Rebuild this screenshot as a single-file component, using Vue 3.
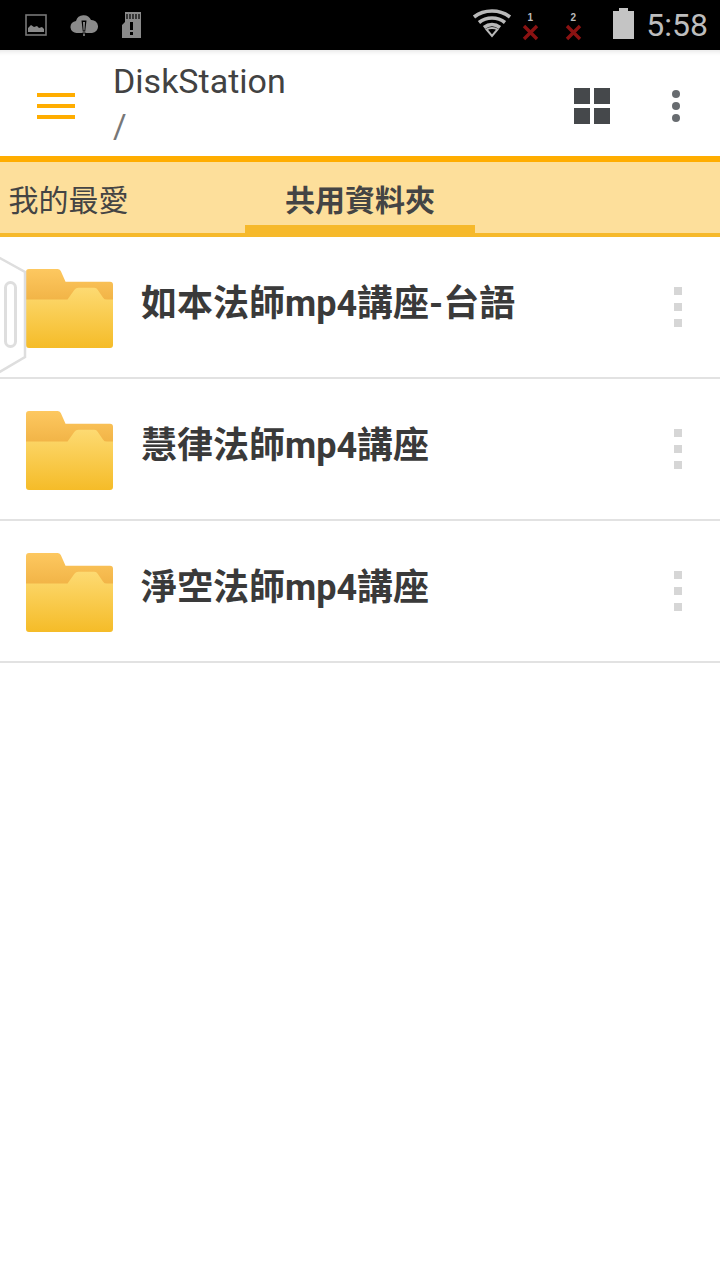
<script setup>
const folders = ['如本法師mp4講座-台語', '慧律法師mp4講座', '淨空法師mp4講座']
</script>

<template>
  <div class="page">
    <div class="status">
      <div class="left-icons">
        <svg class="i-img" width="22" height="22" viewBox="0 0 22 22">
          <rect x="1" y="1" width="20" height="20" fill="none" stroke="#777" stroke-width="1.6" />
          <path d="M3 18v-4l3-3 3 2 3-1 2 2 3-1 2 2v3z" fill="#8a8a8a" />
        </svg>
        <svg class="i-cloud" width="28" height="22" viewBox="0 0 28 22">
          <path d="M7 18a6 6 0 0 1-1-12 8 8 0 0 1 15-1 6.500 6.500 0 0 1 1 13z" fill="#8a8a8a" />
          <path d="M11.500 5.500h5l-1.300 11h-2.400zM12.400 17.500h3.200v4.500h-3.200z" fill="#000" />
          <path d="M13 7h2l-.5 8.500h-1zM13.200 18.500h1.600v2.500h-1.600z" fill="#8a8a8a" />
        </svg>
        <svg class="i-sd" width="19" height="26" viewBox="0 0 19 26">
          <path d="M3 0h16v26H0V13l3-3z" fill="#8a8a8a" />
          <path d="M5 2v5M8 2v5M11 2v5M14 2v5M17 2v5" stroke="#000" stroke-width="1.200" />
          <rect x="8" y="10" width="3" height="8" fill="#000" />
          <rect x="8" y="20" width="3" height="3" fill="#000" />
        </svg>
      </div>
      <div class="right-icons">
        <svg class="i-wifi" width="40" height="30" viewBox="0 0 40 30">
          <g fill="none" stroke="#b9b9b9" stroke-width="3.600">
            <path d="M2 9C12 1 28 1 38 9" />
            <path d="M7 14.500C14.500 8.500 25.500 8.500 33 14.500" />
            <path d="M12 19.500C17 15.500 23 15.500 28 19.500" />
          </g>
          <path d="M14.500 21.500c3-2 8-2 11 0l-5.500 6.500z" fill="none" stroke="#b9b9b9" stroke-width="2" />
        </svg>
        <div class="sim sim-one"><span class="sim-num">1</span><span class="sim-x">
          <svg width="17" height="17" viewBox="0 0 17 17"><path d="M2 2l13 13M15 2L2 15" stroke="#8b1212" stroke-width="3.400" /></svg>
        </span></div>
        <div class="sim sim-two"><span class="sim-num">2</span><span class="sim-x">
          <svg width="17" height="17" viewBox="0 0 17 17"><path d="M2 2l13 13M15 2L2 15" stroke="#8b1212" stroke-width="3.400" /></svg>
        </span></div>
        <svg class="i-batt" width="21" height="31" viewBox="0 0 21 31">
          <path d="M6 0h9v3h6v28H0V3h6z" fill="#c4c4c4" />
        </svg>
        <span class="clock">5:58</span>
      </div>
    </div>

    <header class="appbar">
      <div class="menu"><i></i><i></i><i></i></div>
      <div class="title">
        <div class="name">DiskStation</div>
        <div class="path">/</div>
      </div>
      <div class="grid-btn"><i></i><i></i><i></i><i></i></div>
      <div class="more"><i></i><i></i><i></i></div>
    </header>

    <nav class="tabs">
      <div class="tab tab-fav">我的最愛</div>
      <div class="tab tab-shared">共用資料夾</div>
    </nav>

    <ul class="list">
      <li v-for="f in folders" :key="f" class="row">
        <svg class="folder" width="87" height="79" viewBox="0 0 88 80" preserveAspectRatio="none">
          <defs>
            <linearGradient id="fb" x1="0" y1="0" x2="0" y2="1">
              <stop offset="0" stop-color="#fdc860" />
              <stop offset="1" stop-color="#f0b143" />
            </linearGradient>
            <linearGradient id="ff" x1="0" y1="0" x2="0" y2="1">
              <stop offset="0" stop-color="#fdda72" />
              <stop offset="1" stop-color="#f5bc28" />
            </linearGradient>
          </defs>
          <path d="M0 3q0-3 3-3h29q2 0 3.200 2L40 13h45q3 0 3 3v20H0z" fill="url(#fb)" />
          <path d="M0 31h42l7-10q1.500-2 4-2h16q2.500 0 3.500 2L78 29q1 2 4 2h6v46q0 3-3 3H3q-3 0-3-3z" fill="url(#ff)" />
        </svg>
        <span class="label">{{ f }}</span>
        <div class="row-more"><i></i><i></i><i></i></div>
      </li>
    </ul>

    <svg class="handle" width="30" height="120" viewBox="0 0 30 120">
      <path d="M-2 1L25 16v85L-2 117" fill="#fff" stroke="#dedede" stroke-width="2.500" />
      <rect x="5.500" y="26.500" width="10" height="64" rx="5" fill="#fff" stroke="#dedede" stroke-width="3" />
    </svg>
  </div>
</template>

<style scoped>
.page {
  position: relative;
  width: 720px;
  height: 1280px;
  background: #fff;
  overflow: hidden;
  font-family: "Noto Sans CJK TC", "Noto Sans", sans-serif;
}
.status {
  height: 50px;
  background: #000;
  display: flex;
  align-items: center;
  justify-content: space-between;
}
.left-icons {
  display: flex;
  align-items: center;
  padding-left: 25px;
}
.i-cloud { margin-left: 23px; margin-top: 2px; }
.i-sd { margin-left: 24px; margin-top: 0; }
.right-icons {
  display: flex;
  align-items: center;
  padding-right: 12px;
}
.i-wifi { margin-top: -4px; }
.sim {
  display: flex;
  flex-direction: column;
  align-items: center;
  width: 18px;
  margin-left: 9px;
  margin-top: 4px;
}
.sim-two { margin-left: 25px; }
.sim-num {
  color: #bbb;
  font: bold 10px/12px "Liberation Sans", sans-serif;
}
.sim-x { display: flex; height: 18px; }
.i-batt { margin-left: 31px; margin-top: -4px; }
.clock {
  margin-left: 12px;
  color: #bdbdbd;
  font: 32px/50px Roboto, sans-serif;
}
.appbar {
  height: 106px;
  display: flex;
  align-items: center;
  box-shadow: inset 0 6px 4px -4px #e8e8e8;
}
.menu {
  width: 38px;
  margin-left: 37px;
  margin-top: 6px;
  display: flex;
  flex-direction: column;
  gap: 7px;
}
.menu i { display: block; height: 4px; background: #ffad00; }
.title { margin-left: 38px; margin-bottom: 4px; flex: 1; color: #444; }
.name { font: 34px/50px Roboto, sans-serif; color: #424242; }
.path { font: 33px/42px Roboto, sans-serif; color: #777; margin-bottom: -2px; }
.grid-btn {
  display: grid;
  grid-template-columns: 16px 16px;
  grid-auto-rows: 16px;
  gap: 4px;
  margin-top: 6px;
  margin-right: 62px;
}
.grid-btn i { background: #45484b; }
.more {
  display: flex;
  flex-direction: column;
  gap: 4px;
  margin-top: 6px;
  margin-right: 40px;
}
.more i { width: 8px; height: 8px; border-radius: 50%; background: #686c70; }
.tabs {
  position: relative;
  height: 71px;
  background: #fddf9b;
  border-top: 6px solid #ffad00;
  border-bottom: 4px solid #f6b92b;
  display: flex;
  align-items: center;
  font-size: 30px;
  color: #444;
}
.tab { height: 71px; line-height: 73px; text-align: center; }
.tab-fav { width: 137px; }
.tab-shared {
  position: relative;
  width: 230px;
  margin-left: 108px;
  font-weight: 700;
  border-bottom: 8px solid #f6b92b;
  box-sizing: border-box;
}
.list { list-style: none; margin: 0; padding: 0; }
.row {
  height: 140px;
  border-bottom: 2px solid #e2e2e2;
  display: flex;
  align-items: center;
  padding-left: 26px;
}
.folder { margin-top: 3px; flex: none; }
.label {
  margin-left: 28px;
  flex: 1;
  font-family: Roboto, "Noto Sans CJK TC", sans-serif;
  font-size: 36px;
  font-weight: 700;
  color: #3a3a3a;
  margin-top: -14px;
  white-space: nowrap;
}
.row-more {
  display: flex;
  flex-direction: column;
  gap: 8px;
  margin-right: 38px;
}
.row-more i { width: 8px; height: 8px; background: #d6d6d6; }
.handle {
  position: absolute;
  left: 0;
  top: 256px;
}
</style>
